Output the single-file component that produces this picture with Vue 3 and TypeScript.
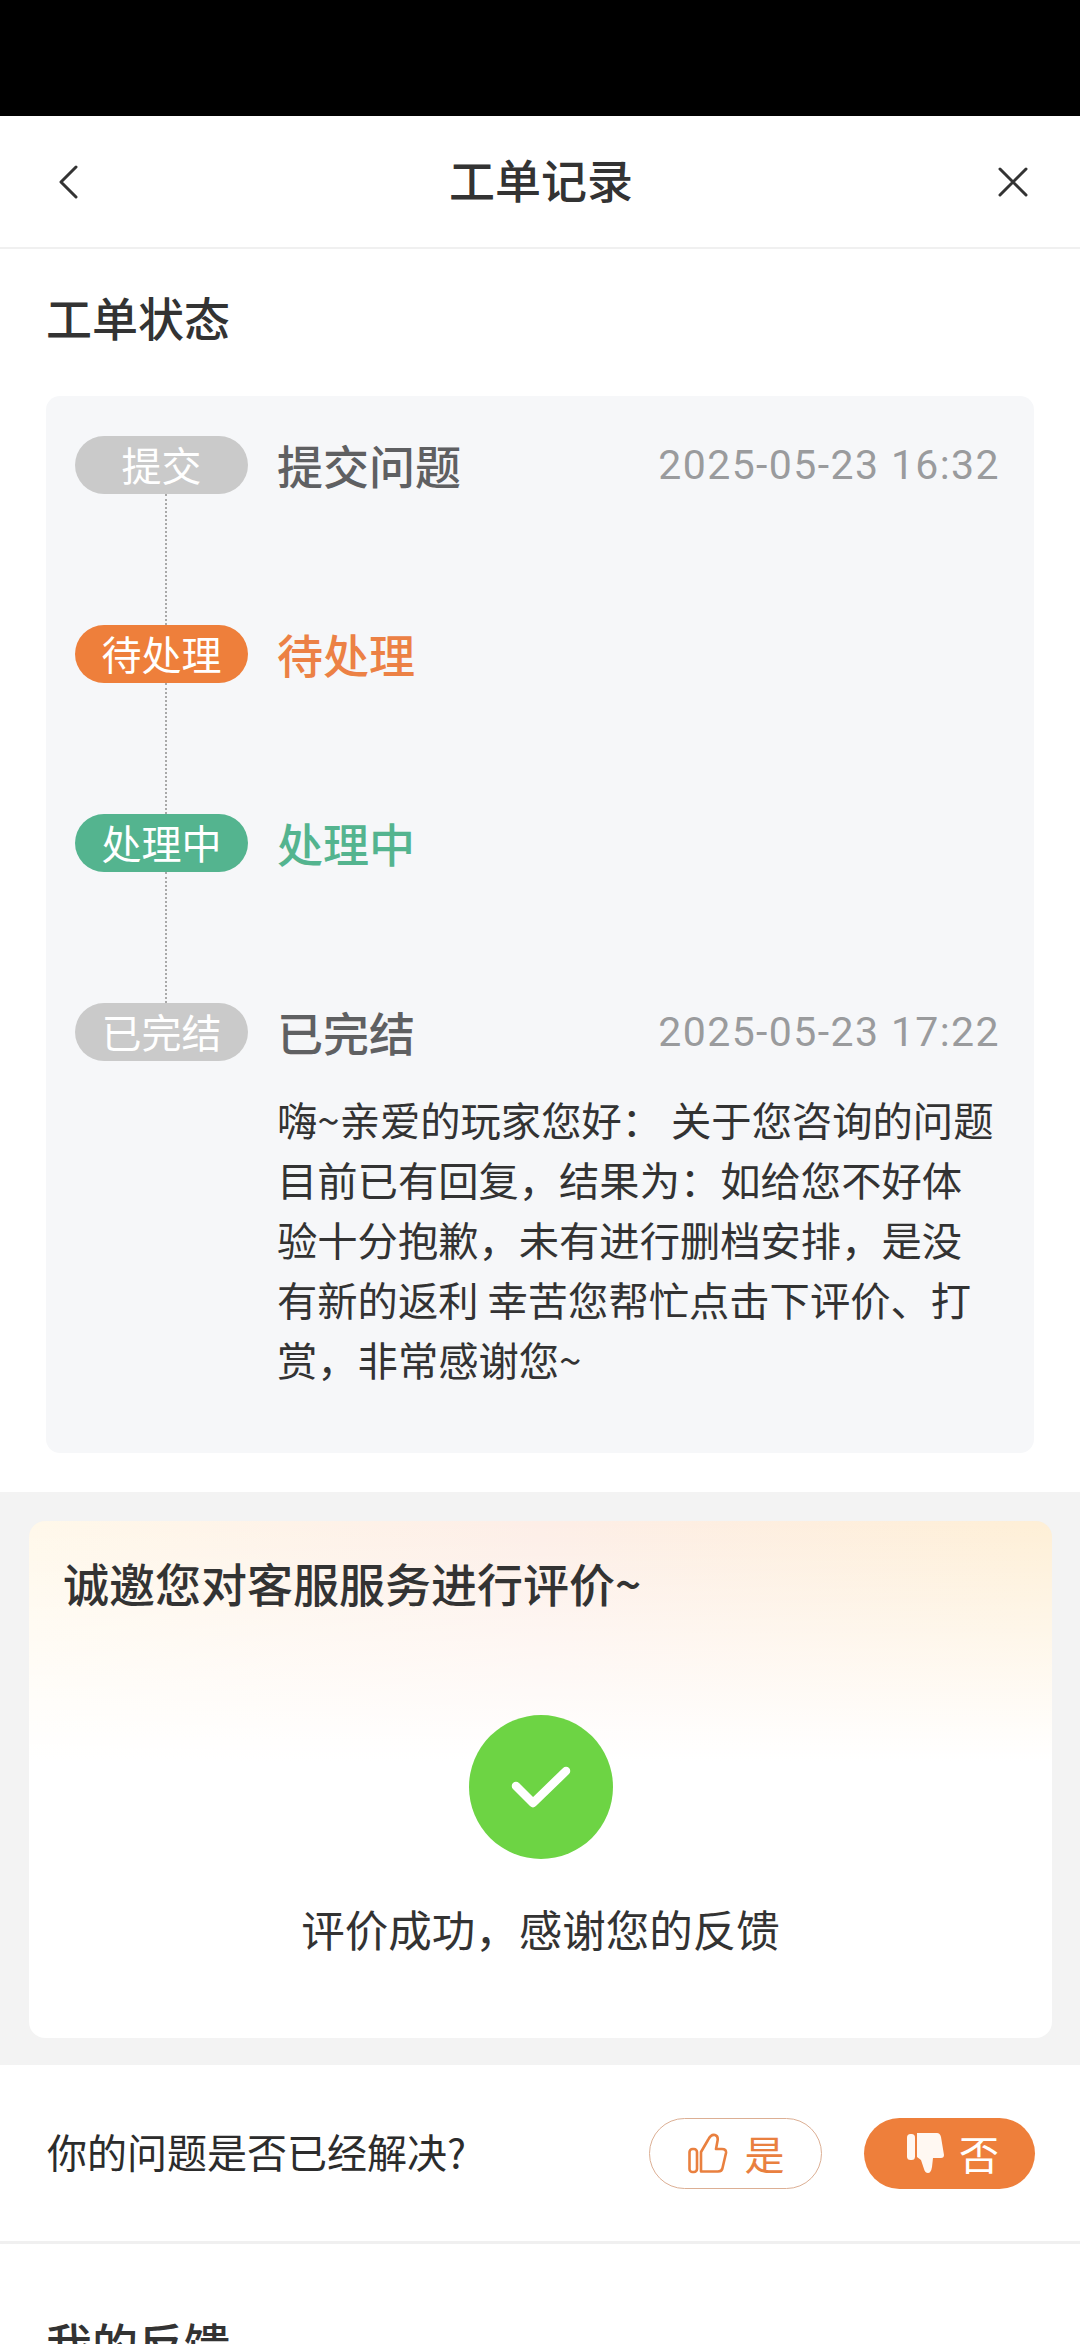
<script setup lang="ts">
const steps = [
  { pill: "提交", title: "提交问题", time: "2025-05-23 16:32", tone: "done" },
  { pill: "待处理", title: "待处理", time: "", tone: "wait" },
  { pill: "处理中", title: "处理中", time: "", tone: "doing" },
  { pill: "已完结", title: "已完结", time: "2025-05-23 17:22", tone: "done" },
];
</script>

<template>
  <div class="page">
    <div class="statusbar"></div>

    <header class="nav">
      <svg class="nav-icon back" viewBox="0 0 20 34" fill="none" stroke="#333" stroke-width="3" stroke-linecap="round" stroke-linejoin="round">
        <path d="M18 2 3 17l15 15" />
      </svg>
      <h1 class="nav-title">工单记录</h1>
      <svg class="nav-icon close" viewBox="0 0 30 30" fill="none" stroke="#333" stroke-width="3" stroke-linecap="round">
        <path d="M2 2l26 26M28 2 2 28" />
      </svg>
    </header>

    <section class="status">
      <h2 class="section-title">工单状态</h2>
      <div class="timeline">
        <div v-for="(s, i) in steps" :key="i" class="step" :class="s.tone">
          <span class="pill">{{ s.pill }}</span>
          <span class="step-title">{{ s.title }}</span>
          <span v-if="s.time" class="step-time">{{ s.time }}</span>
        </div>
        <p class="reply">嗨~亲爱的玩家您好： 关于您咨询的问题目前已有回复，结果为：如给您不好体验十分抱歉，未有进行删档安排，是没有新的返利 幸苦您帮忙点击下评价、打赏，非常感谢您~</p>
      </div>
    </section>

    <section class="rating-wrap">
      <div class="rating">
        <h3 class="rating-title">诚邀您对客服服务进行评价~</h3>
        <div class="ok-circle">
          <svg viewBox="0 0 60 44" width="60" height="44" fill="none" stroke="#fff" stroke-width="8.500" stroke-linecap="round" stroke-linejoin="round">
            <path d="M5 21l17 17L55 6" />
          </svg>
        </div>
        <p class="ok-text">评价成功，感谢您的反馈</p>
      </div>
    </section>

    <section class="solved">
      <span class="solved-q">你的问题是否已经解决?</span>
      <div class="solved-btns">
        <button class="btn yes">
          <svg viewBox="0 0 40 41" width="40" height="41" fill="none" stroke="#e9803f" stroke-width="2.600" stroke-linejoin="round">
            <rect x="1.500" y="16" width="7.500" height="23" rx="3" />
            <path d="M13 38.500V19l7-12q3-6 7-5 3.500 1 2.500 6L28 16h6q4.500 0 4 4l-3.500 15q-.5 3.500-4.500 3.500z" />
          </svg>
          <span>是</span>
        </button>
        <button class="btn no">
          <svg viewBox="0 0 38 41" width="38" height="41" fill="#fff8f2">
            <rect x="0" y="1" width="8" height="26" rx="3.500" />
            <path d="M10 0h20q3 0 4 4l3 18q0 3-3 3h-8l-1 9q-1 6-4 6t-4-4l-3-9-4-3z" />
          </svg>
          <span>否</span>
        </button>
      </div>
    </section>

    <section class="feedback">
      <h2 class="section-title">我的反馈</h2>
    </section>
  </div>
</template>

<style>
html,
body {
  margin: 0;
  background: #fff;
}
</style>

<style scoped>
.page {
  width: 1080px;
  height: 2344px;
  overflow: hidden;
  background: #fff;
  font-family: "Noto Sans CJK SC", "Noto Sans", sans-serif;
  color: #333;
}

.statusbar {
  height: 116px;
  background: #000;
}

.nav {
  height: 131px;
  border-bottom: 2px solid #f0f0f0;
  display: flex;
  align-items: center;
  justify-content: space-between;
  padding: 0 52px 0 58px;
}

.nav-icon.back {
  width: 20px;
  height: 34px;
  margin-right: 6px;
}

.nav-icon.close {
  width: 30px;
  height: 30px;
}

.nav-title {
  margin: 0 0 7px;
  font-size: 46px;
  font-weight: 500;
  line-height: 60px;
}

.status {
  padding: 37px 46px 39px;
}

.section-title {
  margin: 0;
  font-size: 46px;
  font-weight: 500;
  line-height: 60px;
  color: #333;
}

.timeline {
  margin-top: 50px;
  background: #f6f7f9;
  border-radius: 14px;
  padding: 40px 34px 64px 29px;
}

.step {
  position: relative;
  display: flex;
  align-items: center;
  height: 58px;
  margin-bottom: 131px;
}

.step:nth-last-child(2) {
  margin-bottom: 28px;
}

.step:not(:nth-last-child(2))::after {
  content: "";
  position: absolute;
  left: 90px;
  top: 58px;
  height: 131px;
  border-left: 2px dotted #a9a9a9;
}

.pill {
  flex: none;
  width: 173px;
  height: 58px;
  border-radius: 29px;
  background: #cacaca;
  color: #fff;
  font-size: 40px;
  line-height: 56px;
  text-align: center;
}

.step-title {
  margin-left: 29px;
  padding-bottom: 3px;
  font-size: 46px;
  font-weight: 500;
  line-height: 58px;
  color: #5f6062;
}

.step-time {
  margin-left: auto;
  font-family: Roboto, sans-serif;
  font-size: 41px;
  letter-spacing: 1.4px;
  color: #9a9b9d;
}

.step.wait .pill {
  background: #ee7f3b;
}

.step.wait .step-title {
  color: #ec8145;
}

.step.doing .pill {
  background: #54b48f;
}

.step.doing .step-title {
  color: #54b48f;
}

.reply {
  width: 722px;
  margin: 0 0 0 202px;
  font-size: 40.300px;
  line-height: 60px;
  color: #333;
}

.rating-wrap {
  background: #f3f3f3;
  padding: 29px 28px 27px 29px;
}

.rating {
  height: 517px;
  border-radius: 16px;
  background:
    linear-gradient(to bottom, rgba(255, 255, 255, 0), #fff 240px),
    linear-gradient(90deg, #fff8ea 0%, #fdeee7 50%, #feefd6 100%);
  display: flex;
  flex-direction: column;
  align-items: center;
}

.rating-title {
  align-self: flex-start;
  margin: 31px 0 0 34px;
  font-size: 46px;
  font-weight: 500;
  line-height: 60px;
  color: #333;
}

.ok-circle {
  margin-top: 103px;
  width: 144px;
  height: 144px;
  border-radius: 50%;
  background: #6dd444;
  display: flex;
  align-items: center;
  justify-content: center;
}

.ok-text {
  margin: 40px 0 0;
  font-size: 43.500px;
  line-height: 60px;
  color: #333;
}

.solved {
  height: 176px;
  border-bottom: 3px solid #f0f0f0;
  display: flex;
  align-items: center;
  justify-content: space-between;
  padding: 0 45px 0 47px;
}

.solved-q {
  margin-bottom: 5px;
  font-size: 40px;
  color: #2c2c2c;
}

.solved-btns {
  display: flex;
  gap: 42px;
}

.btn {
  height: 71px;
  border-radius: 36px;
  display: flex;
  align-items: center;
  justify-content: center;
  gap: 17px;
  font-family: inherit;
  font-size: 40px;
  padding: 0;
  box-sizing: border-box;
}

.btn.yes {
  width: 173px;
  padding-left: 1px;
  background: #fff;
  border: 1.5px solid #dcaf94;
  color: #e9803f;
}

.btn.no {
  width: 171px;
  padding-left: 7px;
  background: #ee7f3b;
  border: none;
  color: #fff;
  gap: 14px;
}

.feedback {
  padding: 68px 46px 0;
}
</style>
